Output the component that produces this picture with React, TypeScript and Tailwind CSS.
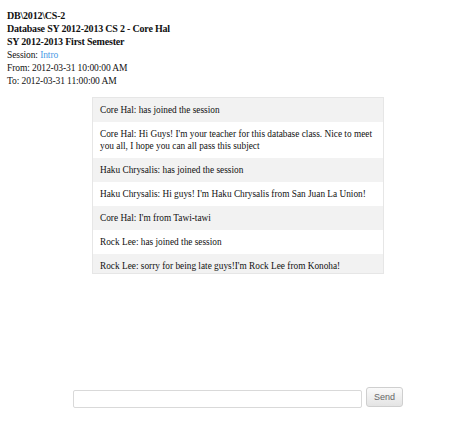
import React from "react";

const messages: string[] = [
  "Core Hal: has joined the session",
  "__row2__",
  "Haku Chrysalis: has joined the session",
  "Haku Chrysalis: Hi guys! I'm Haku Chrysalis from San Juan La Union!",
  "Core Hal: I'm from Tawi-tawi",
  "Rock Lee: has joined the session",
  "Rock Lee: sorry for being late guys!I'm Rock Lee from Konoha!",
];

export default function App() {
  return (
    <div
      className="w-[462px] h-[425px] bg-white text-[#111] overflow-hidden"
      style={{ fontFamily: '"Liberation Serif", "Times New Roman", serif' }}
    >
      <div className="pl-[7px] pt-[9px]">
        <div className="font-bold text-[10px] leading-[13px] tracking-[-0.2px]">
          DB\2012\CS-2
        </div>
        <div className="font-bold text-[10px] leading-[13px] tracking-[-0.2px]">
          Database SY 2012-2013 CS 2 - Core Hal
        </div>
        <div className="font-bold text-[10px] leading-[13px] tracking-[-0.2px]">
          SY 2012-2013 First Semester
        </div>
        <div className="text-[9.5px] leading-[13px] mt-[1px] tracking-[-0.1px]">
          <div>
            Session: <span className="text-[#4a9be6]">Intro</span>
          </div>
          <div>From: 2012-03-31 10:00:00 AM</div>
          <div>To: 2012-03-31 11:00:00 AM</div>
        </div>
      </div>
      <div className="ml-[92px] mt-[9px] w-[292px] h-[177px] overflow-hidden border border-[#e6e6e6]">
        {messages.map((m, i) => (
          <div
            key={i}
            className={`pl-[7px] pr-[6px] py-[6px] leading-[12px] text-[9.3px] whitespace-nowrap ${
              i % 2 === 0 ? "bg-[#f2f2f2]" : "bg-white"
            }`}
          >
            {m === "__row2__" ? (
              <>
                <div className="w-[272px] text-justify [text-align-last:justify]">
                  Core Hal: Hi Guys! I'm your teacher for this database class. Nice to meet
                </div>
                <div>you all, I hope you can all pass this subject</div>
              </>
            ) : (
              m
            )}
          </div>
        ))}
      </div>
      <div className="ml-[73px] mt-[113px] flex items-start gap-[4px]">
        <input
          type="text"
          className="mt-[3px] w-[289px] h-[18px] border border-[#d9d9d9] rounded-[2px] bg-white outline-none"
        />
        <button
          className="w-[37px] h-[20px] border border-[#cfcfcf] rounded-[3px] bg-gradient-to-b from-[#fafafa] to-[#e4e4e4] text-[#666] text-[9px] leading-[18px]"
          style={{ fontFamily: '"Liberation Sans", Arial, sans-serif' }}
        >
          Send
        </button>
      </div>
    </div>
  );
}
